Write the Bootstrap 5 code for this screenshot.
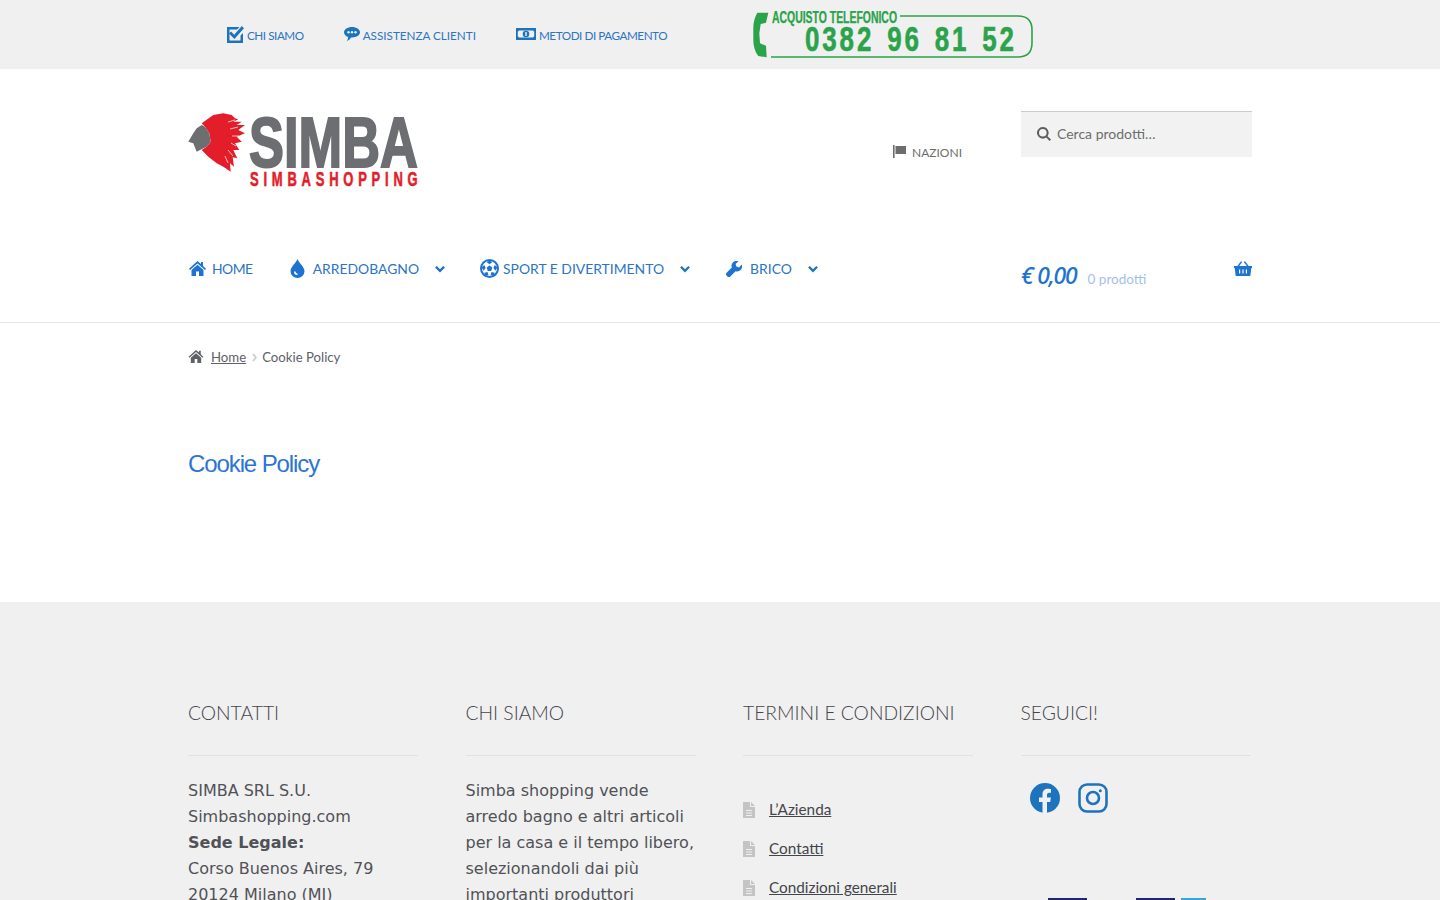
<!DOCTYPE html>
<html lang="it">
<head>
    <meta charset="UTF-8">
    <meta name="viewport" content="width=device-width, initial-scale=1.0">
    <title>Cookie Policy - Simba Shopping</title>
    <link href="https://cdn.jsdelivr.net/npm/bootstrap@5.3.0/dist/css/bootstrap.min.css" rel="stylesheet">
    <style>
        html, body { height: 900px; overflow: hidden; }
        body { font-family: Lato, "Noto Sans", sans-serif; color: #43454b; background: #fff; }
        .site-wrap { width: 1064px; margin: 0 auto; }

        .top-strip { height: 69px; background: #f0f0f0; }
        .top-strip .site-wrap { height: 69px; padding-left: 39px; }
        .top-link { display: flex; align-items: center; color: #2c75c4; font-size: 11.7px; text-decoration: none; }
        .top-link svg { fill: #1e73be; display: block; margin: -3px 3px 0 0; }
        .top-link-tight { letter-spacing: -.45px; }
        .top-links { gap: 40px; width: 526px; padding-top: 3px; }
        .phone-box { width: 282px; height: 50px; display: block; margin-top: 11px; }

        .brand-row { height: 177px; }
        .brand-logo { width: 232px; height: 80px; display: block; margin-top: 40px; }
        .nation-link { color: #6d6d6d; font-size: 12px; margin-top: 75px; margin-right: 59px; text-decoration: none; }
        .nation-link svg { fill: #6d6d6d; margin: 1px 6px 0 0; }
        .search-field { width: 231px; height: 46px; margin-top: 42px; background: #f2f2f2; border-top: 1px solid #ccc; padding: 0 0 2px 16px; color: #6d6d6d; font-size: 14px; }
        .search-field svg { fill: #5d5d5d; margin-right: 6px; }

        .menu-row { height: 77px; border-bottom: 1px solid #e6e6e6; }
        .menu-row .site-wrap { height: 76px; }
        .main-menu { gap: 35px; padding-top: 12px; padding-left: 1px; }
        .menu-link { color: #2c75c4; font-size: 13.9px; line-height: 21px; text-decoration: none; }
        .menu-link svg { fill: #1e73d0; display: block; }
        .menu-home { letter-spacing: -.5px; margin-right: 2px; }
        .menu-home svg { margin-right: 6px; }
        .menu-sport { margin-right: 1px; }
        .menu-caret { margin-left: 16px; width: 10px; height: 8px; stroke: #1e73be; stroke-width: 2.6; }
        .menu-link .menu-caret { fill: none; }
        .cart-box { width: 231px; color: #1e73be; padding-top: 12px; }
        .cart-total { font-family: "Noto Sans", sans-serif; font-style: italic; font-weight: 500; font-size: 23px; letter-spacing: -1.2px; color: #1e73d0; }
        .cart-count { font-size: 13.5px; color: #a4bfe6; margin-left: 11px; margin-top: 8px; }
        .cart-basket { fill: #1e73d0; margin-top: 3px; }

        .crumb-row { padding-top: 25px; font-size: 13.2px; color: #5f6167; height: 60px; }
        .crumb-row a { color: #5f6167; }
        .crumb-row svg { fill: #5f6167; }
        .crumb-home { margin: 2px 7px 0 0; }
        .crumb-row .crumb-sep { width: 5px; height: 9px; fill: none; stroke: #c9c9c9; stroke-width: 1.6; margin: 5px 5px 0 6px; }

        .page-title { color: #2c75d2; font-family: "Liberation Sans", sans-serif; font-size: 24px; font-weight: 400; letter-spacing: -1.1px; margin: 0; padding-top: 67px; height: 219px; }

        .site-foot { background: #f0f0f0; height: 298px; padding-top: 96px; }
        .foot-grid { display: grid; grid-template-columns: repeat(4, 230px); column-gap: 47.5px; }
        .foot-head { font-family: Lato, sans-serif; font-size: 19.3px; font-weight: 300; color: #43454b; margin: 0; padding: 1px 0 26px; border-bottom: 1px solid #e2e2e2; line-height: 28px; height: 58px; }
        .foot-text { font-family: "DejaVu Sans", sans-serif; font-size: 16px; line-height: 26px; color: #505257; margin: 22px 0 0; }
        .foot-list { margin: 34px 0 0; padding: 0; list-style: none; font-size: 15.3px; }
        .foot-list li { display: flex; align-items: center; height: 39px; }
        .foot-list a { color: #43454b; }
        .foot-list svg { fill: #c4c4c4; margin-right: 14px; flex: none; }
        .social-row { gap: 18px; margin: 27px 0 0 9px; }
        .social-row svg { display: block; }
        .pay-row { gap: 49px; margin: 84px 0 0 27px; }
        .pay-mark { display: block; width: 39px; height: 12px; background: #24256e; }
        .pay-mark-light { width: 25px; background: #39a3dc; margin-left: -43px; }
    </style>
</head>
<body>

<!-- top strip -->
<div class="top-strip">
    <div class="site-wrap d-flex">
        <div class="top-links d-flex align-items-center">
            <a class="top-link top-link-tight" href="#">
                <svg width="17" height="17" viewBox="0 0 17 17"><path d="M0 1h12.500l-2.500 2.500H2.500v11h11V9.500l2.500-2.500v10H0z"/><path d="M4 5.500l3.200 3.200L14.800 0 17 2.200 7.400 13 2 7.500z"/></svg>
                CHI SIAMO
            </a>
            <a class="top-link" href="#">
                <svg width="16" height="15" viewBox="0 0 16 15"><path d="M8 0c4.400 0 8 2.300 8 5.200s-3.600 5.200-8 5.200H7c-1 1.800-2.400 3-4.400 3.600 1-1 1.500-2.300 1.500-4C1.600 9.100 0 7.300 0 5.200 0 2.300 3.600 0 8 0z"/><g fill="#f0f0f0"><circle cx="4.500" cy="5.200" r="1.200"/><circle cx="8" cy="5.200" r="1.200"/><circle cx="11.500" cy="5.200" r="1.200"/></g></svg>
                ASSISTENZA CLIENTI
            </a>
            <a class="top-link top-link-tight" href="#">
                <svg width="20" height="12" viewBox="0 0 20 12"><path fill-rule="evenodd" d="M0 0h20v12H0zM3 2.500 1.800 3.700v4.600L3 9.500h14l1.200-1.200V3.700L17 2.500z"/><circle cx="10" cy="6" r="3.300"/><rect x="9.300" y="4" width="1.400" height="4" fill="#f0f0f0"/></svg>
                METODI DI PAGAMENTO
            </a>
        </div>
        <svg class="phone-box" viewBox="0 0 282 50" role="img" aria-label="Acquisto telefonico 0382 96 81 52">
            <path d="M4.300 1.700H15.300L13 11.700 7.700 13 6.300 22.300 7 32.300 13 34.700 13.700 46.300 5.300 45C2 41 .3 35 .3 29V17.300C.3 11 2 6 4.300 1.700z" fill="#2aa34a"/>
            <path d="M147 5H265q14 0 14 14v13q0 14-14 14H18" fill="none" stroke="#2aa34a" stroke-width="1.600"/>
            <text x="19" y="12" font-family="Liberation Sans" font-weight="700" font-size="16" fill="#2aa34a" stroke="#2aa34a" stroke-width=".3" textLength="125" lengthAdjust="spacingAndGlyphs">ACQUISTO TELEFONICO</text>
            <text transform="translate(52 39.500) scale(.72 1)" font-family="Liberation Sans" font-weight="700" font-size="36" fill="#2aa34a" stroke="#2aa34a" stroke-width=".6" letter-spacing="4" word-spacing="4">0382 96 81 52</text>
        </svg>
    </div>
</div>

<!-- logo, nations, search -->
<div class="site-wrap brand-row d-flex justify-content-between">
    <svg class="brand-logo" viewBox="0 0 232 80" role="img" aria-label="Simba Shopping">
        <path d="M13.700 14.300 25.300 6 35.300 4.300 43.700 6 47 9.300 50.300 10.300 45.300 12.700 53.700 12.700 48.700 16 57 16 50.300 21 57 24.300 48.700 27.700 53.700 32.700 47 34.300 51.300 41 45.300 41 49.300 49.300 44.700 48.300 46 57.700 42 54.300 42.700 62.700 35.300 57.700 28.700 54.300 20.300 47.700 13.700 41 18.700 37.700 22.700 32.700 21.300 24.300 17 17.700z" fill="#e31e2a"/>
        <path d="M13.700 16 17 17.700 21.300 24.300 22.700 32.700 18.700 37.700 12 41 8.700 42.700 5.300 34.300 .3 32.700 5.300 24.300 8.700 19.300z" fill="#6d6e70"/>
        <path d="M40 13l7-2M42 20l8-2M44 27l7 0M43 34l5 3M40 41l5 6M37 47l3 7" fill="none" stroke="#fff" stroke-width=".7"/>
        <text x="61" y="58" font-family="Liberation Sans" font-weight="700" font-size="71" fill="#6d6e71" stroke="#6d6e71" stroke-width="2" textLength="169" lengthAdjust="spacingAndGlyphs">SIMBA</text>
        <text transform="translate(62 77) scale(.65 1)" font-family="Liberation Sans" font-weight="700" font-size="20" fill="#e31e2a" stroke="#e31e2a" stroke-width=".6" textLength="258" lengthAdjust="spacing">SIMBASHOPPING</text>
    </svg>
    <div class="d-flex">
        <a class="nation-link d-flex align-items-start" href="#">
            <svg width="13" height="13" viewBox="0 0 13 13"><path d="M0 0h1.600v13H0zM2.500 1h10.500v8H2.500z"/></svg>
            NAZIONI
        </a>
        <div class="search-field d-flex align-items-center">
            <svg width="14" height="14" viewBox="0 0 14 14"><path fill-rule="evenodd" d="M5.800 0a5.800 5.800 0 0 1 4.700 9.200L14 12.600 12.600 14 9.200 10.500A5.800 5.800 0 1 1 5.800 0zm0 2a3.800 3.800 0 1 0 0 7.600 3.800 3.800 0 0 0 0-7.600z"/></svg>
            Cerca prodotti…
        </div>
    </div>
</div>

<!-- main menu -->
<div class="menu-row">
    <div class="site-wrap d-flex justify-content-between">
        <nav class="main-menu d-flex align-items-start">
            <a class="menu-link menu-home d-flex align-items-center" href="#">
                <svg width="17" height="15" viewBox="0 0 17 15"><path d="M8.500 0 12 3V1h2v4l3 2.800-1 1.100-7.500-6.500L1 8.900 0 7.800z"/><path d="M2.500 9 8.500 3.800 14.500 9v6H10v-4.500H7V15H2.500z"/></svg>
                HOME
            </a>
            <a class="menu-link d-flex align-items-center" href="#">
                <svg width="15" height="19" viewBox="0 0 15 19" class="me-2"><path fill-rule="evenodd" d="M7.500 0c1 3.500 7 8 7 12a7 7 0 0 1-14 0c0-4 6-8.500 7-12zM4 12.500a3.500 3.500 0 0 0 3.500 3.500v-1.500a2 2 0 0 1-2-2z"/></svg>
                ARREDOBAGNO
                <svg class="menu-caret" viewBox="0 0 11 8"><path d="M1 1.500l4.500 4.500L10 1.500"/></svg>
            </a>
            <a class="menu-link menu-sport d-flex align-items-center" href="#">
                <svg width="19" height="19" viewBox="0 0 19 19" class="me-1"><path fill-rule="evenodd" d="M9.500 0a9.500 9.500 0 1 1 0 19 9.500 9.500 0 0 1 0-19zm0 2a7.500 7.500 0 1 0 0 15 7.500 7.500 0 0 0 0-15z"/><path d="M9.500 6.500 12.300 8.500 11.200 12H7.800L6.700 8.500zM9.500 1.500l3 1.500-3 2.200-3-2.200zM1.600 8.300 4.300 6l1.300 3-2 2.800zM17.400 8.300 14.700 6l-1.300 3 2 2.800zM5 17l-.7-3.300 3.200-.7 1 3.300zM14 17l.7-3.300-3.200-.7-1 3.300z"/></svg>
                SPORT E DIVERTIMENTO
                <svg class="menu-caret" viewBox="0 0 11 8"><path d="M1 1.500l4.500 4.500L10 1.500"/></svg>
            </a>
            <a class="menu-link d-flex align-items-center" href="#">
                <svg width="16" height="16" viewBox="0 0 16 16" class="me-2"><path d="M15.800 3.600 13 6.400l-2.600-.8-.8-2.600L12.400.2c-2-.7-4.200-.2-5.500 1.200C5.500 2.800 5.200 4.800 5.800 6.500L.6 11.700c-.8.800-.8 2.100 0 2.900l.8.800c.8.800 2.100.8 2.900 0l5.200-5.200c1.700.6 3.700.2 5.100-1.100 1.400-1.400 1.800-3.500 1.200-5.500z"/></svg>
                BRICO
                <svg class="menu-caret" viewBox="0 0 11 8"><path d="M1 1.500l4.500 4.500L10 1.500"/></svg>
            </a>
        </nav>
        <div class="cart-box d-flex align-items-start justify-content-between">
            <div class="d-flex align-items-center">
                <span class="cart-total">€ 0,00</span>
                <span class="cart-count">0 prodotti</span>
            </div>
            <svg class="cart-basket" width="18" height="15" viewBox="0 0 18 15"><path fill-rule="evenodd" d="M0 5h3.300L7 .2l1.200.9L5.200 5h7.600L9.800 1.100 11 .2 14.700 5H18v2h-.7l-1 8H1.700l-1-8H0zm5 3.500v4h1.200v-4zm3.400 0v4h1.200v-4zm3.400 0v4H13v-4z"/></svg>
        </div>
    </div>
</div>

<!-- breadcrumb and title -->
<div class="site-wrap">
    <div class="crumb-row d-flex align-items-start">
        <svg class="crumb-home" width="16" height="13" viewBox="0 0 17 15"><path d="M8.500 0 12 3V1h2v4l3 2.800-1 1.100-7.500-6.500L1 8.900 0 7.800z"/><path d="M2.500 9 8.500 3.800 14.500 9v6H10v-4.500H7V15H2.500z"/></svg>
        <a href="#">Home</a>
        <svg class="crumb-sep" viewBox="0 0 5 9"><path d="M1 1l3 3.500L1 8"/></svg>
        <span>Cookie Policy</span>
    </div>
    <h1 class="page-title">Cookie Policy</h1>
</div>

<!-- footer -->
<footer class="site-foot">
    <div class="site-wrap foot-grid">
        <div>
            <h4 class="foot-head">CONTATTI</h4>
            <p class="foot-text">SIMBA SRL S.U.<br>Simbashopping.com<br><strong>Sede Legale:</strong><br>Corso Buenos Aires, 79<br>20124 Milano (MI)</p>
        </div>
        <div>
            <h4 class="foot-head">CHI SIAMO</h4>
            <p class="foot-text">Simba shopping vende arredo bagno e altri articoli per la casa e il tempo libero, selezionandoli dai più importanti produttori</p>
        </div>
        <div>
            <h4 class="foot-head">TERMINI E CONDIZIONI</h4>
            <ul class="foot-list">
                <li><svg width="12" height="16" viewBox="0 0 12 16"><path fill-rule="evenodd" d="M0 0h7v5h5v11H0zM8 0l4 4H8zM3 8v1h6V8zm0 2.500v1h6v-1zM3 13v1h6v-1z"/></svg><a href="#">L’Azienda</a></li>
                <li><svg width="12" height="16" viewBox="0 0 12 16"><path fill-rule="evenodd" d="M0 0h7v5h5v11H0zM8 0l4 4H8zM3 8v1h6V8zm0 2.500v1h6v-1zM3 13v1h6v-1z"/></svg><a href="#">Contatti</a></li>
                <li><svg width="12" height="16" viewBox="0 0 12 16"><path fill-rule="evenodd" d="M0 0h7v5h5v11H0zM8 0l4 4H8zM3 8v1h6V8zm0 2.500v1h6v-1zM3 13v1h6v-1z"/></svg><a href="#">Condizioni generali</a></li>
            </ul>
        </div>
        <div>
            <h4 class="foot-head">SEGUICI!</h4>
            <div class="social-row d-flex">
                <svg width="30" height="31" viewBox="0 0 30 31"><circle cx="15" cy="15" r="15" fill="#1e73be"/><path d="M12.500 31V19H9v-4.500h3.500v-3c0-3.800 2.200-5.800 5.500-5.800 1.600 0 3 .3 3 .3v3.700h-1.800c-1.800 0-2.200 1.100-2.200 2.200v2.600h3.900l-.7 4.500H17v12z" fill="#f0f0f0"/></svg>
                <svg width="30" height="30" viewBox="0 0 30 30" fill="none" stroke="#1e73be" stroke-width="2.600"><rect x="1.500" y="1.500" width="27" height="27" rx="7.500"/><circle cx="15" cy="15" r="6"/><circle cx="22.300" cy="7.700" r="1.500" fill="#1e73be" stroke="none"/></svg>
            </div>
            <div class="pay-row d-flex">
                <span class="pay-mark"></span>
                <span class="pay-mark"></span>
                <span class="pay-mark pay-mark-light"></span>
            </div>
        </div>
    </div>
</footer>

<script src="https://cdn.jsdelivr.net/npm/bootstrap@5.3.0/dist/js/bootstrap.bundle.min.js"></script>
</body>
</html>
